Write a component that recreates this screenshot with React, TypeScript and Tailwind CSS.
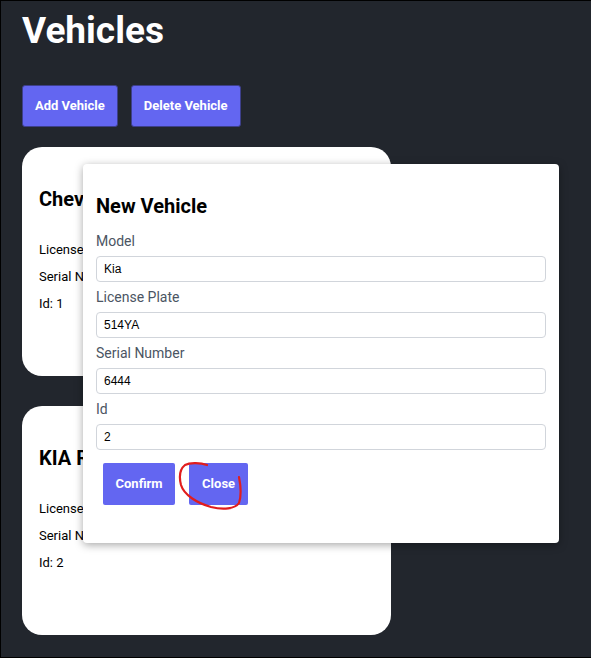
import { useState } from "react";

type Vehicle = { model: string; plate: string; serial: string; id: number };

const vehicles: Vehicle[] = [
  { model: "Chevrolet Spark", plate: "123AB", serial: "1111", id: 1 },
  { model: "KIA Rio", plate: "514YA", serial: "6444", id: 2 },
];

function Field({ label, value }: { label: string; value: string }) {
  return (
    <div className="flex flex-col">
      <label className="text-[14px] leading-[16px] text-[#4b5563] mb-[7px]">{label}</label>
      <input
        defaultValue={value}
        className="h-[26px] w-full rounded-[4px] border border-[#d1d5db] px-[7px] text-[12px] text-black font-['Liberation_Sans',Arial,sans-serif] outline-none mb-[7px]"
      />
    </div>
  );
}

export default function App() {
  const [open, setOpen] = useState(true);

  return (
    <div className="relative min-h-[658px] bg-[#22262d] border-t border-b border-l border-black font-['Roboto',sans-serif]">
      <div className="px-[21px] pb-[22px]">
        <h1 className="pt-[9px] text-[37px] leading-[42px] font-bold text-white">Vehicles</h1>
        <div className="mt-[33px] flex gap-[13px]">
          <button onClick={() => setOpen(true)} className="h-[42px] px-[12px] rounded-[3px] border border-[#3d3f8a] bg-[#6366f1] text-[13px] font-bold text-white">
            Add Vehicle
          </button>
          <button className="h-[42px] px-[12px] rounded-[3px] border border-[#3d3f8a] bg-[#6366f1] text-[13px] font-bold text-white">
            Delete Vehicle
          </button>
        </div>

        <div className="mt-[20px] flex flex-col gap-[30px]">
          {vehicles.map((v) => (
            <div key={v.id} className="w-[369px] h-[229px] rounded-[20px] bg-white px-[17px] pt-[39px] overflow-hidden">
              <h2 className="text-[20px] leading-[26px] font-bold text-black whitespace-nowrap">{v.model}</h2>
              <div className="mt-[29px] flex flex-col gap-[9px] text-[13px] leading-[18px] text-black">
                <p className="whitespace-nowrap">License Plate: {v.plate}</p>
                <p className="whitespace-nowrap">Serial Number: {v.serial}</p>
                <p>Id: {v.id}</p>
              </div>
            </div>
          ))}
        </div>
      </div>

      {open && (
        <div className="absolute left-[82px] top-[163px] w-[476px] h-[379px] rounded-[4px] bg-white shadow-[0_2px_8px_rgba(0,0,0,0.35)] px-[13px] pt-[29px]">
          <h2 className="text-[20px] leading-[26px] font-bold text-black mb-[14px]">New Vehicle</h2>
          <Field label="Model" value="Kia" />
          <Field label="License Plate" value="514YA" />
          <Field label="Serial Number" value="6444" />
          <Field label="Id" value="2" />
          <div className="flex gap-[14px] pl-[7px] mt-[6px]">
            <button className="h-[42px] px-[12.5px] rounded-[2px] bg-[#6366f1] text-[13px] font-bold text-white">
              Confirm
            </button>
            <button onClick={() => setOpen(false)} className="relative h-[42px] px-[13px] rounded-[2px] bg-[#6366f1] text-[13px] font-bold text-white">
              Close
              <svg className="absolute left-[-12px] top-[-4px] pointer-events-none" width="70" height="56" viewBox="0 0 70 56" fill="none">
                <path
                  d="M30 6 C22 3 12 4 8 6 C3 10 2 18 4 26 C7 36 20 44 34 48 C46 51 58 50 62 44 C64 38 64 28 62 18"
                  stroke="#e11d1d"
                  strokeWidth="2.2"
                  strokeLinecap="round"
                />
              </svg>
            </button>
          </div>
        </div>
      )}
    </div>
  );
}
